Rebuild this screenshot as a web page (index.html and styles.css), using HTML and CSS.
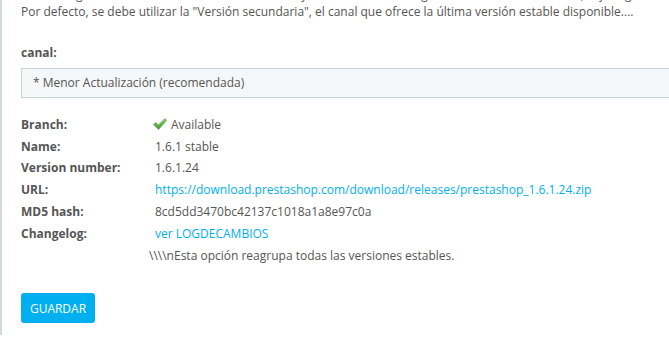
FILE: index.html
```html
<!DOCTYPE html>
<html lang="es">

<head>
    <meta charset="UTF-8">
    <meta name="viewport" content="width=device-width, initial-scale=1.0">
    <title>Actualización</title>
    <link rel="stylesheet" href="styles.css">
</head>

<body>
    <div class="panel">
        <p class="help">
            Puede elegir entre varios canales de actualización y cada uno ofrece un grado distinto de estabilidad; elija según su tienda y la prioridad que le dé a la seguridad.<br>
            Por defecto, se debe utilizar la "Versión secundaria", el canal que ofrece la última versión estable disponible....
        </p>

        <label class="field_label">canal:</label>
        <div class="select_box">* Menor Actualización (recomendada)</div>

        <ul class="info">
            <li class="row">
                <span class="key">Branch:</span>
                <span class="val">
                    <svg class="tick" width="14" height="12" viewBox="0 0 14 12">
                        <defs>
                            <linearGradient id="g" x1="0" y1="0" x2="0" y2="1">
                                <stop offset="0" stop-color="#8fd16f" />
                                <stop offset="1" stop-color="#3f9a2c" />
                            </linearGradient>
                        </defs>
                        <path d="M0.5 6.5 L2.8 4.6 L5.4 7 L12 0.6 L13.6 2.4 L5.6 11.4 Z" fill="url(#g)" stroke="#4a9a35" stroke-width="0.6" stroke-linejoin="round" />
                    </svg>
                    Available
                </span>
            </li>
            <li class="row">
                <span class="key">Name:</span>
                <span class="val">1.6.1 stable</span>
            </li>
            <li class="row">
                <span class="key">Version number:</span>
                <span class="val">1.6.1.24</span>
            </li>
            <li class="row">
                <span class="key">URL:</span>
                <a class="val link" href="#">https://download.prestashop.com/download/releases/prestashop_1.6.1.24.zip</a>
            </li>
            <li class="row">
                <span class="key">MD5 hash:</span>
                <span class="val">8cd5dd3470bc42137c1018a1a8e97c0a</span>
            </li>
            <li class="row">
                <span class="key">Changelog:</span>
                <a class="val link" href="#">ver LOGDECAMBIOS</a>
            </li>
            <li class="row note">\\\\nEsta opción reagrupa todas las versiones estables.</li>
        </ul>

        <button class="save_btn">Guardar</button>
    </div>
</body>

</html>
```

FILE: styles.css
```css
* {
    margin: 0;
    padding: 0;
    box-sizing: border-box;
    list-style: none;
}

body {
    font-family: "Open Sans", "Liberation Sans", sans-serif;
    font-size: 12px;
    color: #555;
    background: #fff;
    overflow: hidden;
}

.panel {
    height: 349px;
    border-left: 2px solid #d6d9db;
    padding-left: 19px;
}

/* la primera línea queda cortada por arriba, como en la captura */
.help {
    line-height: 17px;
    margin-top: -14.5px;
    white-space: nowrap;
    overflow: hidden;
}

.field_label {
    display: block;
    margin-top: 24px;
    line-height: 18px;
    font-weight: bold;
}

.select_box {
    margin-top: 6px;
    height: 30px;
    line-height: 28px;
    padding-left: 11px;
    background: #f5f8f9;
    border: 1px solid #c7d6db;
    border-right: none;
}

.info {
    margin-top: 16px;
}

.row {
    display: flex;
    align-items: center;
    height: 21.8px;
    white-space: nowrap;
}

.key {
    width: 134px;
    font-weight: bold;
}

.val {
    display: flex;
    align-items: center;
}

.tick {
    margin-left: -2px;
    margin-right: 4px;
}

.link {
    color: #00aff0;
    text-decoration: none;
}

.note {
    padding-left: 128px;
}

.save_btn {
    margin-top: 27px;
    width: 74px;
    height: 30px;
    border: none;
    border-radius: 3px;
    background: #00aff0;
    color: #fff;
    font-family: "Open Sans", "Liberation Sans", sans-serif;
    font-size: 12px;
    text-transform: uppercase;
}
```
